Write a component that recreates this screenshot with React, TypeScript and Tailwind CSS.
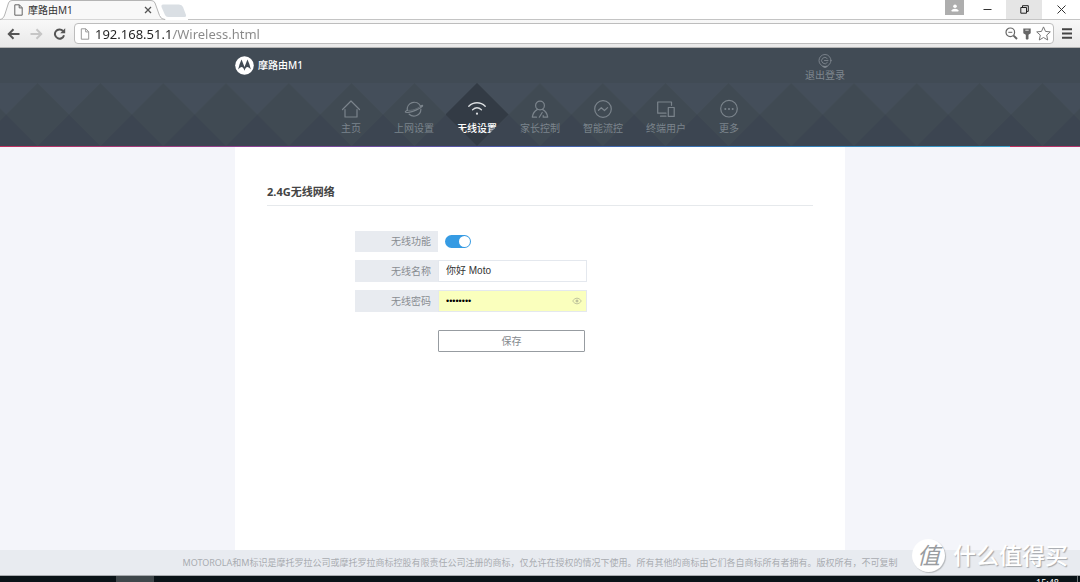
import { useState, type ReactNode } from "react";

const strokeProps = {
  fill: "none",
  stroke: "currentColor",
  strokeLinecap: "round" as const,
  strokeLinejoin: "round" as const,
};

function PageIcon({ className }: { className: string }) {
  return (
    <svg viewBox="0 0 9 12" className={className} fill="none" stroke="currentColor" strokeLinejoin="round">
      <path d="M0.8 0.8h4.6l2.8 2.9v7.5H0.8z" />
      <path d="M5.2 0.9v3h3" />
    </svg>
  );
}

function HomeIcon() {
  return (
    <svg viewBox="0 0 20 20" className="size-5" {...strokeProps} strokeWidth="1.2">
      <path d="M1.500 10.500L10 2l8.500 8.500M4 10.500v7.500h12v-7.500" />
    </svg>
  );
}

function PlanetIcon() {
  return (
    <svg viewBox="0 0 20 20" className="size-5" {...strokeProps} strokeWidth="1.2">
      <path d="M3.300 11.300A7 7 0 0 1 16.500 7.200M16.900 10.200A7 7 0 0 1 5.200 15.200" />
      <path d="M3.300 11.300C0.600 12.600 0.200 13.800 4.500 13.300C9 12.800 15.500 10 18 7.600C19.300 6.200 18.300 5.900 16.500 7.200" />
      <path d="M3.300 11.300C7.500 12 13.500 10 16.500 7.200" strokeWidth="0.6" />
    </svg>
  );
}

function WifiIcon() {
  return (
    <svg viewBox="0 0 20 20" className="size-5" {...strokeProps} stroke="#d9dcdf" strokeWidth="1.4">
      <path d="M1.800 7.200C6.500 2.600 13.500 2.600 18.200 7.200M5.600 10.700C8.300 8.400 11.700 8.400 14.400 10.700" />
      <circle cx="10" cy="14.700" r="1.1" fill="#d9dcdf" stroke="none" />
    </svg>
  );
}

function PersonIcon() {
  return (
    <svg viewBox="0 0 20 20" className="size-5" {...strokeProps} strokeWidth="1.2">
      <circle cx="10" cy="6.500" r="4.400" />
      <path d="M7.500 10.400C4.500 12 2.800 14.500 2.300 18.200H6.500M12.500 10.400C15.500 12 17.200 14.500 17.700 18.200H13.200M13.200 18.200V16.500M12.200 13.500L9.300 18.200" />
    </svg>
  );
}

function FlowIcon() {
  return (
    <svg viewBox="0 0 20 20" className="size-5" {...strokeProps} strokeWidth="1.2">
      <circle cx="10" cy="10" r="8.300" />
      <path d="M5.500 11.300L8.300 8.700L11.500 11.500L14.600 8.600" />
    </svg>
  );
}

function DevicesIcon() {
  return (
    <svg viewBox="0 0 20 20" className="size-5" {...strokeProps} strokeWidth="1.2">
      <path d="M15.500 6.300V3H1.700v11.200H10M4.500 17.200H10" />
      <path d="M12.300 8.500h5.900v8.900h-5.900z" />
    </svg>
  );
}

function MoreIcon() {
  return (
    <svg viewBox="0 0 20 20" className="size-5" {...strokeProps} strokeWidth="1.2">
      <circle cx="10" cy="9.700" r="8.300" />
      <g fill="currentColor" stroke="none">
        <circle cx="6.300" cy="9.900" r="1" />
        <circle cx="10" cy="9.900" r="1" />
        <circle cx="13.700" cy="9.900" r="1" />
      </g>
    </svg>
  );
}

const navItems: { label: string; icon: ReactNode; active?: boolean }[] = [
  { label: "主页", icon: <HomeIcon /> },
  { label: "上网设置", icon: <PlanetIcon /> },
  { label: "无线设置", icon: <WifiIcon />, active: true },
  { label: "家长控制", icon: <PersonIcon /> },
  { label: "智能流控", icon: <FlowIcon /> },
  { label: "终端用户", icon: <DevicesIcon /> },
  { label: "更多", icon: <MoreIcon /> },
];

function TabStrip() {
  return (
    <div className="flex h-5 items-start bg-white">
      <div className="relative flex h-5 w-[188px] shrink-0 items-center">
        <svg viewBox="0 0 188 20" className="absolute inset-0 h-5 w-[188px]">
          <path d="M0 19.500C3 19 4 17 5 14L8.500 3Q9.300 0.500 12 0.500H151Q154 0.500 155 3L159.500 15.500Q161 19.500 165 19.500V20H0z" fill="#f8f8f8" stroke="#b4b4b4" />
          <path d="M163 4.500H179Q182 4.500 183 7L186 15Q186.500 17 184 17H168Q166 17 165 15L161.500 7Q161 4.500 163 4.500z" fill="#dadfe4" />
        </svg>
        <div className="relative flex w-[154px] items-center gap-[5px] pl-[14px]">
          <PageIcon className="h-3 w-[9px] text-[#666]" />
          <span className="flex-1 text-[10px] leading-4 text-[#333]">摩路由M1</span>
          <button type="button" aria-label="关闭标签页" className="flex size-3 items-center justify-center text-[#555]">
            <svg viewBox="0 0 8 8" className="size-2" stroke="currentColor" strokeWidth="1.300">
              <path d="M1 1l6 6M7 1L1 7" />
            </svg>
          </button>
        </div>
      </div>
      <div className="h-5 flex-1 border-b border-[#c4c4c4]" />
      <div className="flex h-5 items-start border-b border-[#c4c4c4]">
        <button type="button" aria-label="用户" className="mr-1 flex h-[15px] w-[19px] items-center justify-center bg-[#aeaeae] text-white">
          <svg viewBox="0 0 8 8" className="size-2" fill="currentColor">
            <circle cx="4" cy="2.300" r="1.800" />
            <path d="M0.700 7.500V6.300Q1 4.800 4 4.800T7.300 6.300V7.500z" />
          </svg>
        </button>
        <button type="button" aria-label="最小化" className="flex h-[19px] w-[38px] items-center justify-center text-[#333]">
          <svg viewBox="0 0 9 9" className="size-[9px]" stroke="currentColor">
            <path d="M0.500 4.500h8" />
          </svg>
        </button>
        <button type="button" aria-label="还原" className="flex h-[19px] w-9 items-center justify-center bg-[#e5e5e5] text-[#222]">
          <svg viewBox="0 0 9 9" className="size-[9px]" fill="none" stroke="currentColor">
            <path d="M0.800 2.500h5.700v5.700H0.800zM2.500 2.500V0.700H8.300V6.400H6.500" />
          </svg>
        </button>
        <button type="button" aria-label="关闭" className="flex h-[19px] w-[38px] items-center justify-center text-[#333]">
          <svg viewBox="0 0 9 9" className="size-[9px]" stroke="currentColor">
            <path d="M0.500 0.500l8 8M8.500 0.500l-8 8" />
          </svg>
        </button>
      </div>
    </div>
  );
}

function Toolbar() {
  return (
    <div className="flex h-7 items-center border-b border-[#b5b5b5] bg-[#f2f2f2] bg-linear-to-b from-[#f8f8f8] to-[#e9e9e9] pr-2 pl-[7px]">
      <div className="flex w-[67px] items-center gap-[10px]">
        <button type="button" aria-label="后退" className="text-[#555]">
          <svg viewBox="0 0 13 12" className="h-3 w-[13px]" fill="none" stroke="currentColor" strokeWidth="2">
            <path d="M12.500 6H2M6.500 1.300L1.800 6l4.700 4.700" />
          </svg>
        </button>
        <button type="button" aria-label="前进" className="text-[#c6c6c6]">
          <svg viewBox="0 0 13 12" className="h-3 w-[13px]" fill="none" stroke="currentColor" strokeWidth="2">
            <path d="M0.500 6H11M6.500 1.300L11.200 6l-4.700 4.700" />
          </svg>
        </button>
        <button type="button" aria-label="重新加载" className="text-[#555]">
          <svg viewBox="0 0 13 12" className="h-3 w-[13px]" fill="none" stroke="currentColor" strokeWidth="2">
            <path d="M10 3A4.600 4.600 0 1 0 11 7.200" />
            <path d="M12.200 0.300V5.300H7.200z" fill="currentColor" stroke="none" />
          </svg>
        </button>
      </div>
      <div className="flex h-[21px] flex-1 items-center rounded-sm border border-[#bdbdbd] bg-white pr-[2px] pl-[5px]">
        <PageIcon className="h-3 w-[10px] text-[#999]" />
        <input
          aria-label="地址"
          defaultValue="192.168.51.1/Wireless.html"
          className="ml-[5px] h-[19px] min-w-0 flex-1 bg-linear-to-r from-[#222] from-[76px] to-[#888] to-[76px] bg-clip-text pt-px text-[13px] leading-[18px] text-transparent caret-black outline-none"
        />
        <div className="flex items-center gap-1 text-[#666]">
          <svg viewBox="0 0 13 13" className="size-[13px]" fill="none" stroke="currentColor">
            <circle cx="5.300" cy="5.300" r="4.300" strokeWidth="1.200" />
            <path d="M3.300 5.300h4" />
            <path d="M8.600 8.600l3.400 3.400" strokeWidth="2" />
          </svg>
          <svg viewBox="0 0 10 12" className="h-3 w-[10px]" fill="currentColor">
            <path d="M1.300 0.500h7.400v4.700L6.500 6.800V11L5 11.800L3.800 11V6.800L1.300 5.200z" />
            <path d="M3.300 2.200h3.400" stroke="#fff" strokeWidth="0.800" />
          </svg>
          <button type="button" aria-label="收藏">
            <svg viewBox="0 0 15 15" className="size-[15px]" fill="none" stroke="#777" strokeLinejoin="round">
              <path d="M7.500 0.900l2 4.500 4.800 0.500-3.600 3.200 1 4.900-4.200-2.500-4.200 2.500 1-4.900L0.700 5.900l4.800-0.500z" />
            </svg>
          </button>
        </div>
      </div>
      <button type="button" aria-label="菜单" className="ml-2 text-[#444]">
        <svg viewBox="0 0 10 11" className="h-[11px] w-[10px]" stroke="currentColor" strokeWidth="2">
          <path d="M0 1.200h10M0 5.500h10M0 9.800h10" />
        </svg>
      </button>
    </div>
  );
}

function DiamondBackdrop() {
  return (
    <svg className="absolute inset-0 size-full" aria-hidden="true">
      <svg x="50%" overflow="visible">
        <defs>
          <pattern id="diamonds" width="62.800" height="63" x="-31.400" patternUnits="userSpaceOnUse">
            <rect width="62.800" height="32" fill="#444e5a" />
            <rect y="31.500" width="62.800" height="31.500" fill="#3c4551" />
            <path d="M31.400 0L62.800 31.500L31.400 63L0 31.500z" fill="#404a53" />
          </pattern>
        </defs>
        <rect x="-4000" width="8000" height="63" fill="url(#diamonds)" />
      </svg>
    </svg>
  );
}

function Header() {
  return (
    <header>
      <div className="flex h-[35px] justify-center bg-[#414b55]">
        <div className="flex w-full max-w-[610px] items-center justify-between">
          <div className="flex items-center gap-1 text-[10px] font-medium text-white">
            <svg viewBox="0 0 20 20" className="size-[19px]">
              <circle cx="10" cy="10" r="9.800" fill="#fff" />
              <path d="M6.900 3.700L10 11.500L13.100 3.700Q15.600 8.500 16.700 14.300Q14.800 11.600 13.200 11.500Q11 11.500 10 15.600Q9 11.500 6.800 11.500Q5.200 11.600 3.300 14.300Q4.400 8.500 6.900 3.700z" fill="#414b55" />
            </svg>
            <span>摩路由M1</span>
          </div>
          <a href="#logout" className="flex flex-col items-center pt-1 text-[10px] leading-[14px] text-[#7f878f]">
            <svg viewBox="0 0 14 14" className="size-[14px]" {...strokeProps} strokeWidth="0.9">
              <circle cx="7" cy="6.500" r="6" />
              <path d="M9.200 4.400A3.200 3.200 0 1 0 9.400 8.500M6.500 6.500H10" />
              <path d="M5 12.700L7 13.600L9 12.700z" fill="currentColor" />
            </svg>
            退出登录
          </a>
        </div>
      </div>
      <nav className="relative flex h-[63px] justify-center overflow-hidden">
        <DiamondBackdrop />
        {navItems.map((item) => (
          <a
            key={item.label}
            href={`#${item.label}`}
            aria-current={item.active ? "page" : undefined}
            className={
              item.active
                ? "relative flex w-[63px] flex-col items-center bg-[#333b45] pt-4 text-[10px] font-medium text-white [clip-path:polygon(50%_0,100%_50%,50%_100%,0_50%)]"
                : "relative flex w-[63px] flex-col items-center pt-4 text-[10px] text-[#7b848c]"
            }
          >
            {item.icon}
            <span className="leading-[18px] whitespace-nowrap">{item.label}</span>
          </a>
        ))}
      </nav>
      <div className="h-px bg-[linear-gradient(to_right,#c0305f,#8a4496_26%,#4b5aa8_50%,#3579b5_75%,#3aa0cc)] bg-[length:1010px_1px]" />
    </header>
  );
}

const labelClass = "flex w-[83px] items-center justify-end bg-[#e8ebf0] pr-[7px] text-[10px] text-[#888d92]";

function WirelessForm() {
  const [enabled, setEnabled] = useState(true);
  return (
    <form className="ml-[88px] flex w-[232px] flex-col gap-2 pt-[25px]" onSubmit={(e) => e.preventDefault()}>
      <div className="flex h-[21px]">
        <label htmlFor="wifi-enabled" className={labelClass}>无线功能</label>
        <div className="flex items-center pl-[7px]">
          <input
            id="wifi-enabled"
            type="checkbox"
            role="switch"
            checked={enabled}
            onChange={(e) => setEnabled(e.target.checked)}
            className="flex h-[13px] w-[26px] appearance-none items-center rounded-full bg-[#b9c0c7] px-px before:size-[11px] before:rounded-full before:bg-white checked:justify-end checked:bg-[#369be3]"
          />
        </div>
      </div>
      <div className="flex h-[22px]">
        <label htmlFor="wifi-name" className={labelClass}>无线名称</label>
        <input
          id="wifi-name"
          defaultValue="你好 Moto"
          className="min-w-0 flex-1 border border-[#e4e8ee] bg-white px-[7px] pb-px font-['Liberation_Sans','Noto_Sans_CJK_SC',sans-serif] text-[10px] text-[#333]"
        />
      </div>
      <div className="flex h-[22px]">
        <label htmlFor="wifi-password" className={labelClass}>无线密码</label>
        <div className="flex min-w-0 flex-1 items-center border border-[#e4e8ee] bg-[#faffbd] pr-1 pl-[7px]">
          <input
            id="wifi-password"
            type="password"
            defaultValue="moto1234"
            className="h-5 min-w-0 flex-1 bg-transparent pb-px font-['Liberation_Sans',sans-serif] text-[9px] text-black outline-none"
          />
          <button type="button" aria-label="显示密码" className="text-[#b9bd98]">
            <svg viewBox="0 0 10 8" className="h-2 w-[10px]" fill="none" stroke="currentColor" strokeWidth="0.900">
              <path d="M0.600 4Q5 -1.800 9.400 4Q5 9.800 0.600 4z" />
              <circle cx="5" cy="4" r="1.100" fill="currentColor" />
            </svg>
          </button>
        </div>
      </div>
      <button type="submit" className="mt-[10px] mr-[2px] ml-[83px] h-[22px] rounded-[1px] border border-[#979ca1] bg-white text-[10px] text-[#84898e]">
        保存
      </button>
    </form>
  );
}

function Watermark() {
  return (
    <div className="absolute right-3 bottom-[3px] flex items-center gap-2 text-white">
      <span className="flex size-[33px] items-center justify-center rounded-full bg-white text-[23px] leading-none text-[#999ca0] italic shadow-[1px_1px_1px_#b5b8bb]">
        值
      </span>
      <span className="text-[23px] leading-none font-medium [text-shadow:1px_1px_1px_#a4a7ab]">什么值得买</span>
    </div>
  );
}

export default function App() {
  return (
    <div className="flex min-h-screen flex-col bg-[#f4f5fa] font-['Noto_Sans','Noto_Sans_CJK_SC',sans-serif]">
      <TabStrip />
      <Toolbar />
      <Header />
      <main className="flex flex-1 justify-center">
        <section className="w-full max-w-[610px] bg-white px-8 pt-[35px]">
          <h1 className="border-b border-[#e6e9ec] pb-1 text-[11px] leading-[19px] font-bold text-[#444]">2.4G无线网络</h1>
          <WirelessForm />
        </section>
      </main>
      <footer className="relative flex h-[26px] items-center justify-center border-b border-[#a9acb0] bg-[#e8ebf0]">
        <p className="text-[9px] whitespace-nowrap text-[#a9acb0]">
          MOTOROLA和M标识是摩托罗拉公司或摩托罗拉商标控股有限责任公司注册的商标，仅允许在授权的情况下使用。所有其他的商标由它们各自商标所有者拥有。版权所有，不可复制
        </p>
        <Watermark />
      </footer>
      <div className="flex h-[6px] overflow-hidden bg-[#0a1318] pl-[116px]">
        <div className="h-[6px] w-[38px] bg-[#3f474b]" />
        <time className="mr-[18px] ml-auto pt-[2px] text-[9px] leading-[9px] text-white">15:48</time>
        <div className="mr-[2px] h-[6px] w-px bg-[#70767a]" />
      </div>
    </div>
  );
}
